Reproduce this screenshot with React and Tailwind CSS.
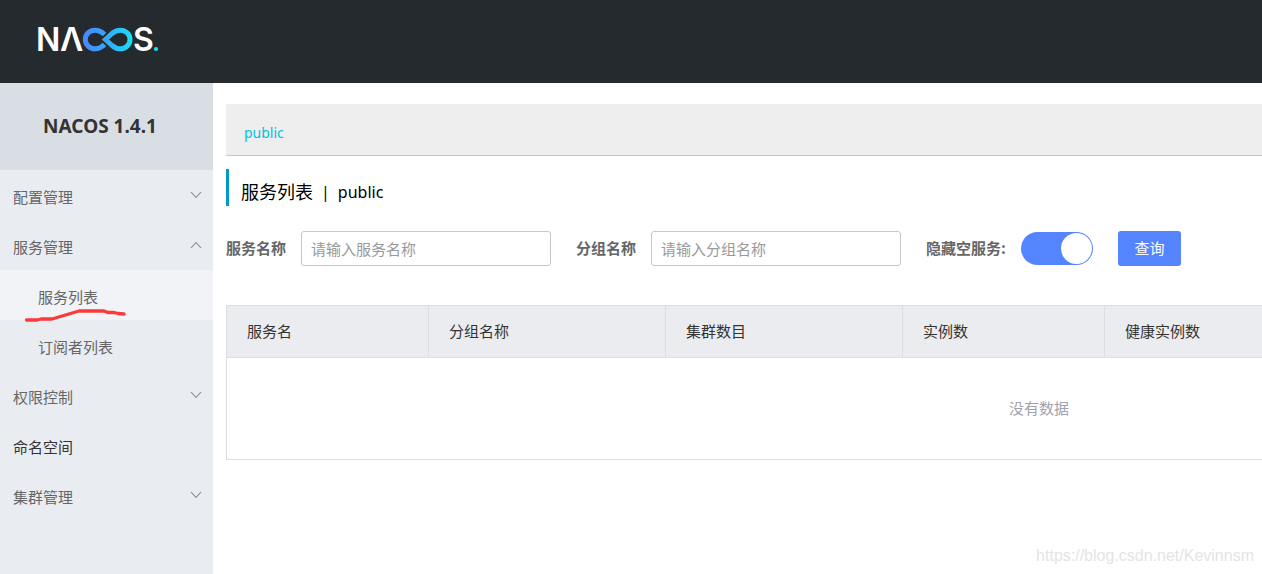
const menu = [
  { name: '配置管理' },
  { name: '服务管理', open: true, children: [{ name: '服务列表', active: true }, { name: '订阅者列表' }] },
  { name: '权限控制' },
  { name: '命名空间', link: true },
  { name: '集群管理' },
];

function Logo() {
  return (
    <svg width="132" height="56" viewBox="-4 -12 132 56" role="img" aria-label="NACOS">
      <defs>
        <linearGradient id="loop" gradientUnits="userSpaceOnUse" x1="46" y1="0" x2="96" y2="0">
          <stop offset="0" stopColor="#4688ff" />
          <stop offset="0.45" stopColor="#35a8fb" />
          <stop offset="1" stopColor="#19e3f3" />
        </linearGradient>
      </defs>
      <g fill="#fff" className="font-['Inter','Liberation_Sans',sans-serif] text-[32px] font-semibold">
        <text x="-2" y="27">N</text>
        <text x="22" y="27">Λ</text>
        <text x="95" y="27">S</text>
      </g>
      <g fill="none" stroke="url(#loop)" strokeWidth="5">
        <path d="M66.5 20.5 C63.5 23.5 61 24.8 57 24.8 C51.5 24.8 47.3 20.7 47.3 15.5 C47.3 10.3 51.5 6.2 57 6.2 C61 6.2 64 8 66.5 10.5" />
        <path d="M67.5 15.5 L74 9.5 C76.5 7.3 79 6.2 82.3 6.2 C87.8 6.2 92 10.3 92 15.5 C92 20.7 87.8 24.8 82.3 24.8 C79 24.8 76.5 23.7 74 21.5 Z" />
      </g>
      <circle cx="118" cy="25" r="2.1" fill="#19e3f3" />
    </svg>
  );
}

function Chevron({ up }) {
  return (
    <svg width="12" height="8" viewBox="0 0 12 8" fill="none" stroke="#858689" strokeWidth="1.1">
      <path d={up ? 'M1 7L6 1.5L11 7' : 'M1 1L6 6.5L11 1'} />
    </svg>
  );
}

function Sidebar() {
  return (
    <aside className="w-[213px] shrink-0 bg-[#e9edf2]">
      <h1 className="h-[87px] bg-[#d9dde4] pr-[13px] text-center font-['Noto_Sans',sans-serif] text-[19px] leading-[87px] font-bold text-[#333]">
        NACOS 1.4.1
      </h1>
      <nav className="text-[15px] leading-[50px] text-[#666]">
        <ul>
          {menu.map((item) => (
            <li key={item.name}>
              {item.link ? (
                <a href="#" className="block h-[50px] px-[13px] pt-[2px] text-[#333]">{item.name}</a>
              ) : (
                <button className="flex h-[50px] w-full items-center justify-between pr-[11px] pl-[13px]">
                  <span className="pt-[4px]">{item.name}</span>
                  <Chevron up={item.open} />
                </button>
              )}
              {item.children && (
                <ul>
                  {item.children.map((child) => (
                    <li key={child.name} className={child.active ? 'relative bg-[#f1f3f7]' : ''}>
                      <a href="#" className="block h-[50px] pt-[2px] pl-[38px]">{child.name}</a>
                      {child.active && (
                        <svg className="absolute top-[38px] left-[24px]" width="104" height="16" viewBox="0 0 104 16" fill="none" stroke="#fb3a3a" strokeWidth="3.3" strokeLinecap="round" strokeLinejoin="round">
                          <path d="M2.5 12H13L17 11H28L55 3H80L84 4.5H90L94 5.5L100 6" />
                        </svg>
                      )}
                    </li>
                  ))}
                </ul>
              )}
            </li>
          ))}
        </ul>
      </nav>
    </aside>
  );
}

function Field({ id, label, placeholder }) {
  return (
    <div className="flex items-center gap-[15px]">
      <label htmlFor={id}>{label}</label>
      <input
        id={id}
        type="text"
        placeholder={placeholder}
        className="h-[35px] w-[250px] rounded-[3px] border border-[#c4c6cf] px-[9px] font-normal placeholder:text-[#999]"
      />
    </div>
  );
}

function ServiceTable() {
  return (
    <div className="mt-[39px] overflow-hidden">
      <table className="w-[1626px] table-fixed border-collapse border border-[#dcdee3]">
        <colgroup>
          <col className="w-[202px]" />
          <col className="w-[237px]" />
          <col className="w-[237px]" />
          <col className="w-[202px]" />
          <col />
        </colgroup>
        <thead className="bg-[#ebecf0] text-left text-[#333]">
          <tr className="h-[52px]">
            {['服务名', '分组名称', '集群数目', '实例数', '健康实例数'].map((name) => (
              <th key={name} className="border border-[#dcdee3] px-5 font-normal">{name}</th>
            ))}
          </tr>
        </thead>
        <tbody>
          <tr className="h-[102px]">
            <td colSpan={5} className="text-center text-[#a0a2ad]">没有数据</td>
          </tr>
        </tbody>
      </table>
    </div>
  );
}

export default function App() {
  return (
    <div className="relative flex min-h-screen flex-col overflow-hidden bg-white font-['Noto_Sans_CJK_SC',sans-serif]">
      <header className="flex h-[83px] items-start bg-[#252a2f] px-[34px] pt-[12px]">
        <a href="#">
          <Logo />
        </a>
      </header>
      <div className="flex flex-1">
        <Sidebar />
        <main className="min-w-0 flex-1 pt-[21px] pl-[13px] text-[15px] text-[#666]">
          <div className="h-[52px] border-b border-[#c7c7c7] bg-[#eee] pt-[4px] pl-[18px] leading-[48px]">
            <a href="#" className="font-['Noto_Sans',sans-serif] text-[14px] text-[#00c1de]">public</a>
          </div>
          <h2 className="mt-[13px] flex h-[37px] items-center gap-[8px] border-l-3 border-[#09c] pt-[8px] pl-[12px] text-[18px] text-black">
            <span>服务列表</span>
            <span className="font-['Noto_Sans',sans-serif] text-[16px]">|</span>
            <span className="font-['Noto_Sans',sans-serif] text-[16px]">public</span>
          </h2>
          <form className="mt-[25px] flex items-center gap-[25px] font-bold whitespace-nowrap">
            <Field id="service" label="服务名称" placeholder="请输入服务名称" />
            <Field id="group" label="分组名称" placeholder="请输入分组名称" />
            <div className="flex items-center gap-[15px]">
              <label htmlFor="hide-empty">隐藏空服务:</label>
              <input
                id="hide-empty"
                type="checkbox"
                role="switch"
                defaultChecked
                className="h-[33px] w-[72px] appearance-none rounded-full bg-[#5584ff] p-[1px] before:block before:size-[31px] before:rounded-full before:bg-white checked:before:ml-auto"
              />
            </div>
            <button type="button" className="h-[35px] w-[63px] rounded-[3px] bg-[#5584ff] font-normal text-white">查询</button>
          </form>
          <ServiceTable />
        </main>
      </div>
      <p className="absolute right-[8px] bottom-[6px] font-['Liberation_Sans',sans-serif] text-[16px] text-[#e4e4e4]">
        https://blog.csdn.net/Kevinnsm
      </p>
    </div>
  );
}
